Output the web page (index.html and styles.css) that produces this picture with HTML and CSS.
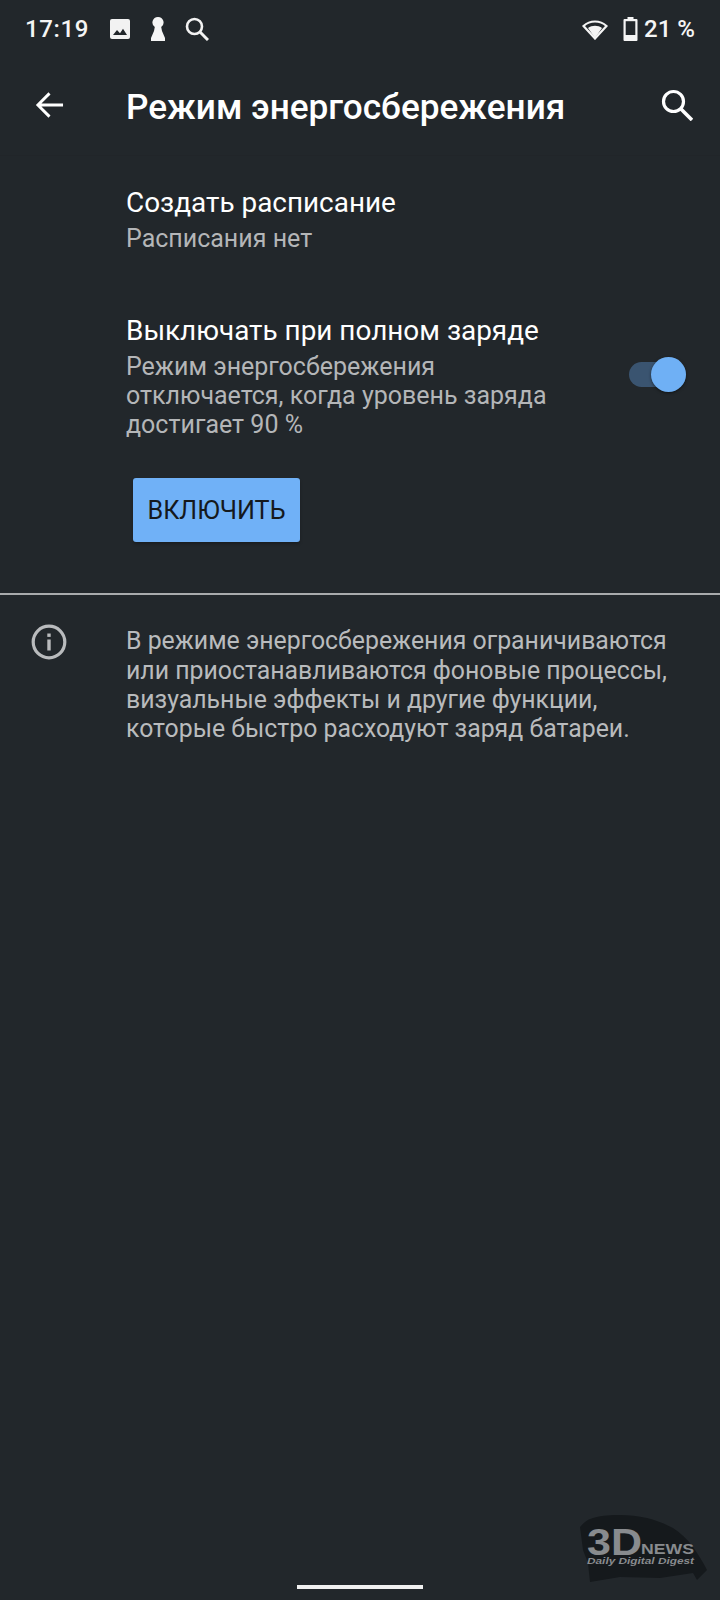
FILE: index.html
```html
<!DOCTYPE html>
<html lang="ru">
<head>
  <meta charset="UTF-8" />
  <meta name="viewport" content="width=device-width, initial-scale=1.0"/>
  <title>Режим энергосбережения</title>
  <link rel="stylesheet" href="styles.css">
</head>
<body>
  <div class="phone">
    <div class="statusbar">
      <span class="time">17:19</span>
      <svg class="st-icon st-photo" viewBox="0 0 20 20"><path fill="#f2f2f2" d="M2 0h16a2 2 0 0 1 2 2v16a2 2 0 0 1-2 2H2a2 2 0 0 1-2-2V2a2 2 0 0 1 2-2z"/><path fill="#22272b" d="M3 16l4-5 3 3.200 3-4.500 4 6.300z"/></svg>
      <svg class="st-icon st-key" viewBox="0 0 14 24"><path fill="#f5f5f5" d="M7 0a5.500 5.500 0 0 1 3.200 10L11 14l3 7v3H0v-3l3-7 .8-4A5.500 5.500 0 0 1 7 0z"/></svg>
      <svg class="st-icon st-search" viewBox="0 0 24 24"><circle cx="9.500" cy="9.500" r="7.500" fill="none" stroke="#f2f2f2" stroke-width="2.600"/><path d="M15 15l8 8" stroke="#f2f2f2" stroke-width="3"/></svg>
      <span class="spacer"></span>
      <svg class="st-icon st-wifi" viewBox="0 0 26 22"><path fill="none" stroke="#f5f5f5" stroke-width="2.200" d="M1.500 8C8 2 18 2 24.500 8L13 20.500z"/><path fill="#f5f5f5" d="M6 10c4-3 10-3 14 0l-7 10z"/></svg>
      <svg class="st-icon st-batt" viewBox="0 0 14 24"><path fill="#f5f5f5" d="M4 0h6v2h3a1 1 0 0 1 1 1v20a1 1 0 0 1-1 1H1a1 1 0 0 1-1-1V3a1 1 0 0 1 1-1h3z"/><rect x="2.200" y="4.200" width="9.600" height="13.800" fill="#22272b"/></svg>
      <span class="batt-text">21 %</span>
    </div>

    <header class="toolbar">
      <svg class="nav-icon back" viewBox="0 0 30 28"><path d="M29 14H3M15 2L3 14l12 12" fill="none" stroke="#fff" stroke-width="3"/></svg>
      <h1>Режим энергосбережения</h1>
      <svg class="nav-icon find" viewBox="0 0 32 32"><circle cx="12.500" cy="12.500" r="10" fill="none" stroke="#fff" stroke-width="3.200"/><path d="M20 20l11 11" stroke="#fff" stroke-width="3.600"/></svg>
    </header>

    <main>
      <section class="item item-schedule">
        <div class="item-title">Создать расписание</div>
        <div class="item-sub">Расписания нет</div>
      </section>

      <section class="item item-toggle">
        <div class="item-body">
          <div class="item-title">Выключать при полном заряде</div>
          <div class="item-sub">Режим энергосбережения<br>отключается, когда уровень заряда<br>достигает 90 %</div>
        </div>
        <div class="switch"><span class="knob"></span></div>
      </section>

      <div class="action"><button class="btn">ВКЛЮЧИТЬ</button></div>

      <hr class="divider">

      <section class="info">
        <svg class="info-icon" viewBox="0 0 36 36"><circle cx="18" cy="18" r="15.800" fill="none" stroke="#b9bbbd" stroke-width="3.200"/><rect x="16.300" y="15.500" width="3.400" height="11" fill="#b9bbbd"/><rect x="16.300" y="9.500" width="3.400" height="3.400" fill="#b9bbbd"/></svg>
        <p>В режиме энергосбережения ограничиваются<br>или приостанавливаются фоновые процессы,<br>визуальные эффекты и другие функции,<br>которые быстро расходуют заряд батареи.</p>
      </section>
    </main>

    <svg class="watermark" viewBox="0 0 130 78">
      <path fill="#15191c" d="M1 15C6 9 10 7 14 6 24 3 33 3 41 3c9 0 18 1 27 3 9 2 18 6 26 10 8 5 14 11 20 19 5 7 10 15 14 23l-10 10-4-7-33 5-40-1-30 5-2-19-5-13z"/>
      <text class="wm-3d" x="8" y="43" textLength="55" lengthAdjust="spacingAndGlyphs">3D</text>
      <text class="wm-news" x="62" y="42" textLength="53" lengthAdjust="spacingAndGlyphs">NEWS</text>
      <text class="wm-tag" x="8" y="51.500" textLength="107" lengthAdjust="spacingAndGlyphs">Daily Digital Digest</text>
    </svg>

    <div class="home-bar"></div>
  </div>
</body>
</html>
```

FILE: styles.css
```css
*{margin:0;padding:0;box-sizing:border-box}
body{font-family:Roboto,sans-serif;background:#22272b;color:#fff}
.phone{position:relative;width:720px;height:1600px;background:#22272b;overflow:hidden}

.statusbar{display:flex;align-items:center;height:58px;padding:0 25px 0 25px;color:#f5f5f5;font-size:24px;font-weight:500}
.time{width:85px;letter-spacing:.6px}
.st-icon{display:block;flex:none}
.st-photo{width:20px;height:20px}
.st-key{width:14px;height:24px;margin-left:21px}
.st-search{width:24px;height:24px;margin-left:20px}
.spacer{flex:1}
.st-wifi{width:26px;height:22px}
.st-batt{width:15px;height:24px;margin-left:15px}
.batt-text{margin-left:6px}

.toolbar{display:flex;align-items:center;height:98px;padding:0 27px 0 35px;border-bottom:1px solid #212529}
.toolbar h1{flex:1;margin-left:62px;font-size:35.200px;font-weight:500;line-height:44px}
.nav-icon{display:block;flex:none;margin-bottom:4px}
.back{width:29px;height:28px}
.find{width:32px;height:32px}

main{padding-top:29px}
.item{padding-left:126px}
.item-title{font-size:27.900px;line-height:36px;color:#fff}
.item-sub{margin-top:2.500px;font-size:25px;line-height:29.300px;color:#b4b6b8}
.item-schedule .item-sub{margin-top:0;line-height:36px}
.item-toggle{display:flex;align-items:center;margin-top:56px;padding-right:34px}
.item-body{flex:1}
.switch{position:relative;width:57px;height:25px;margin-bottom:3px;border-radius:13px;background:#3a5470}
.knob{position:absolute;top:-5px;right:0;width:35px;height:35px;border-radius:50%;background:#6fb0f5;box-shadow:0 1px 3px rgba(0,0,0,.5)}

.action{padding:39px 0 0 133px}
.btn{display:block;width:167px;height:64px;padding-top:1px;border:none;border-radius:3px;background:#70b1f7;color:#15191d;font-family:Roboto,sans-serif;font-size:25.200px;box-shadow:0 2px 3px rgba(0,0,0,.25)}

.divider{height:2px;margin-top:51px;border:none;background:#a9abad}

.info{display:flex;padding:29px 0 0 31px}
.info-icon{display:block;flex:none;width:36px;height:36px}
.info p{margin:2px 0 0 59px;font-size:24.850px;line-height:29.300px;color:#b9bbbd;white-space:nowrap}

.watermark{position:absolute;left:579px;top:1512px;width:130px;height:78px}
.watermark text{font-family:"Liberation Sans",sans-serif;font-weight:700;fill:#888b8e}
.wm-3d{font-size:36px}
.wm-news{font-size:14px}
.wm-tag{font-size:9.500px;font-style:italic}

.home-bar{position:absolute;left:297px;top:1585px;width:126px;height:4px;background:#f0f0f0}
```
